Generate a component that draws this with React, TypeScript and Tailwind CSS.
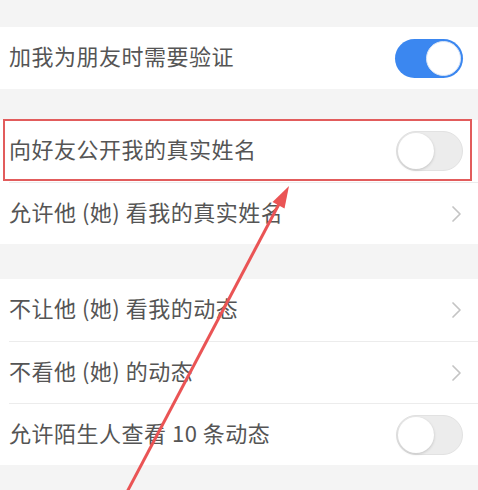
import React from "react";

function ToggleOn() {
  return (
    <div className="w-[68px] h-[39px] rounded-full bg-[#3b87f0] flex items-center justify-end pr-[2px]">
      <div className="w-[35px] h-[35px] rounded-full bg-white border border-[#d8e4f5]" />
    </div>
  );
}

function ToggleOff() {
  return (
    <div className="w-[67px] h-[40px] rounded-full bg-[#ececec] border border-[#e2e2e2] flex items-center justify-start pl-[1px]">
      <div className="w-[36px] h-[36px] rounded-full bg-white shadow-[0_1px_3px_rgba(0,0,0,0.18)]" />
    </div>
  );
}

function Chevron() {
  return (
    <svg width="11" height="18" viewBox="0 0 11 18" className="mr-[1px]">
      <path d="M2 2 L9 9 L2 16" fill="none" stroke="#c4c4c4" strokeWidth="1.7" strokeLinecap="round" strokeLinejoin="round" />
    </svg>
  );
}

function Row({ text, right, divider }: { text: string; right: React.ReactNode; divider?: boolean }) {
  return (
    <div className="pl-[9px]">
      <div className={"h-[62px] flex items-center justify-between pr-[15px] " + (divider ? "border-t border-[#ececec]" : "")}>
        <span className="text-[22px] text-[#555555] tracking-[0.5px] pb-[5px]">{text}</span>
        {right}
      </div>
    </div>
  );
}

export default function App() {
  return (
    <div
      className="relative w-[478px] h-[490px] bg-[#f4f4f4] overflow-hidden"
      style={{ fontFamily: '"Noto Sans CJK SC", "Noto Sans", sans-serif' }}
    >
      <div className="h-[27px]" />
      <div className="bg-white">
        <Row text="加我为朋友时需要验证" right={<ToggleOn />} />
      </div>
      <div className="h-[31px]" />
      <div className="bg-white">
        <Row text="向好友公开我的真实姓名" right={<ToggleOff />} />
        <Row text="允许他 (她) 看我的真实姓名" right={<Chevron />} divider />
      </div>
      <div className="h-[35px]" />
      <div className="bg-white">
        <Row text="不让他 (她) 看我的动态" right={<Chevron />} />
        <Row text="不看他 (她) 的动态" right={<Chevron />} divider />
        <Row text="允许陌生人查看 10 条动态" right={<ToggleOff />} divider />
      </div>

      <div className="absolute left-[3px] top-[119px] w-[469px] h-[62px] border-2 border-[#e25c5c]" />

      <svg className="absolute left-0 top-0" width="478" height="490" viewBox="0 0 478 490">
        <line x1="127" y1="492" x2="279" y2="204" stroke="#ea5455" strokeWidth="3" />
        <polygon points="289,186 284.5,208.5 272.5,202" fill="#ea5455" />
      </svg>
    </div>
  );
}
